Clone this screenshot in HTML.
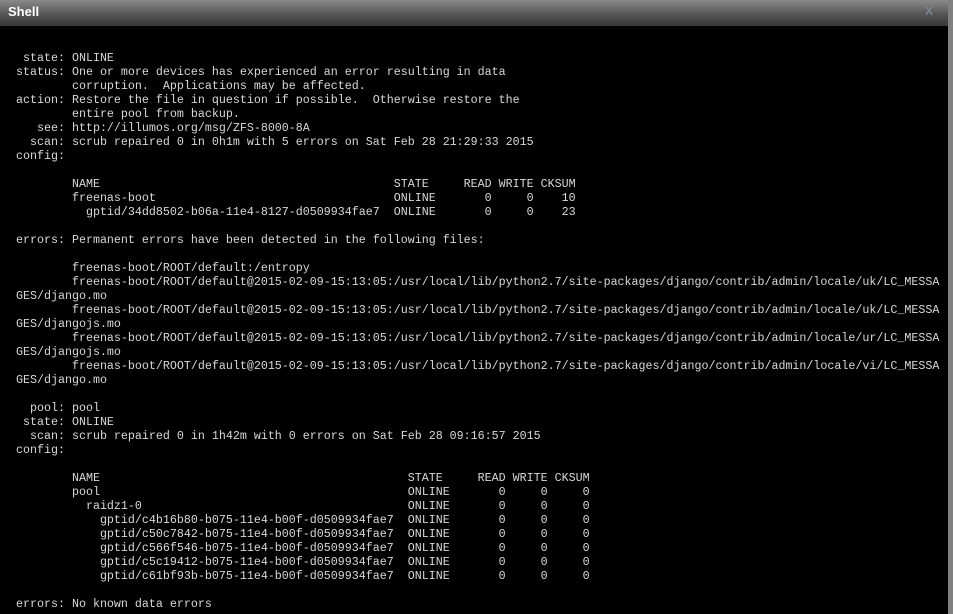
<!DOCTYPE html>
<html><head><meta charset="utf-8"><style>
html,body{margin:0;padding:0;width:953px;height:614px;overflow:hidden;background:#000;}
.bar{position:absolute;left:0;top:0;width:953px;height:24px;background:linear-gradient(#8a8a8a,#555 60%,#3a3a3a);}
.bar2{position:absolute;left:0;top:24px;width:953px;height:2px;background:#3c3c3c;}
.t{position:absolute;left:8px;top:4px;color:#fff;font:bold 13px "Liberation Sans",sans-serif;}
.x{position:absolute;left:925px;top:4px;color:#7a8490;font:bold 12px "Liberation Sans",sans-serif;}
.sb{position:absolute;left:948px;top:0;width:5px;height:614px;background:#808080;}
pre{position:absolute;left:16px;top:51px;margin:0;font-family:"Liberation Mono",monospace;font-size:11.67px;line-height:14px;color:#d8d8d8;}
</style></head><body>
<div class="bar"></div><div class="bar2"></div>
<div class="t">Shell</div><div class="x">X</div>
<div class="sb"></div>
<pre> state: ONLINE
status: One or more devices has experienced an error resulting in data
        corruption.  Applications may be affected.
action: Restore the file in question if possible.  Otherwise restore the
        entire pool from backup.
   see: http://illumos.org/msg/ZFS-8000-8A
  scan: scrub repaired 0 in 0h1m with 5 errors on Sat Feb 28 21:29:33 2015
config:

        NAME                                          STATE     READ WRITE CKSUM
        freenas-boot                                  ONLINE       0     0    10
          gptid/34dd8502-b06a-11e4-8127-d0509934fae7  ONLINE       0     0    23

errors: Permanent errors have been detected in the following files:

        freenas-boot/ROOT/default:/entropy
        freenas-boot/ROOT/default@2015-02-09-15:13:05:/usr/local/lib/python2.7/site-packages/django/contrib/admin/locale/uk/LC_MESSA
GES/django.mo
        freenas-boot/ROOT/default@2015-02-09-15:13:05:/usr/local/lib/python2.7/site-packages/django/contrib/admin/locale/uk/LC_MESSA
GES/djangojs.mo
        freenas-boot/ROOT/default@2015-02-09-15:13:05:/usr/local/lib/python2.7/site-packages/django/contrib/admin/locale/ur/LC_MESSA
GES/djangojs.mo
        freenas-boot/ROOT/default@2015-02-09-15:13:05:/usr/local/lib/python2.7/site-packages/django/contrib/admin/locale/vi/LC_MESSA
GES/django.mo

  pool: pool
 state: ONLINE
  scan: scrub repaired 0 in 1h42m with 0 errors on Sat Feb 28 09:16:57 2015
config:

        NAME                                            STATE     READ WRITE CKSUM
        pool                                            ONLINE       0     0     0
          raidz1-0                                      ONLINE       0     0     0
            gptid/c4b16b80-b075-11e4-b00f-d0509934fae7  ONLINE       0     0     0
            gptid/c50c7842-b075-11e4-b00f-d0509934fae7  ONLINE       0     0     0
            gptid/c566f546-b075-11e4-b00f-d0509934fae7  ONLINE       0     0     0
            gptid/c5c19412-b075-11e4-b00f-d0509934fae7  ONLINE       0     0     0
            gptid/c61bf93b-b075-11e4-b00f-d0509934fae7  ONLINE       0     0     0

errors: No known data errors</pre>
</body></html>
